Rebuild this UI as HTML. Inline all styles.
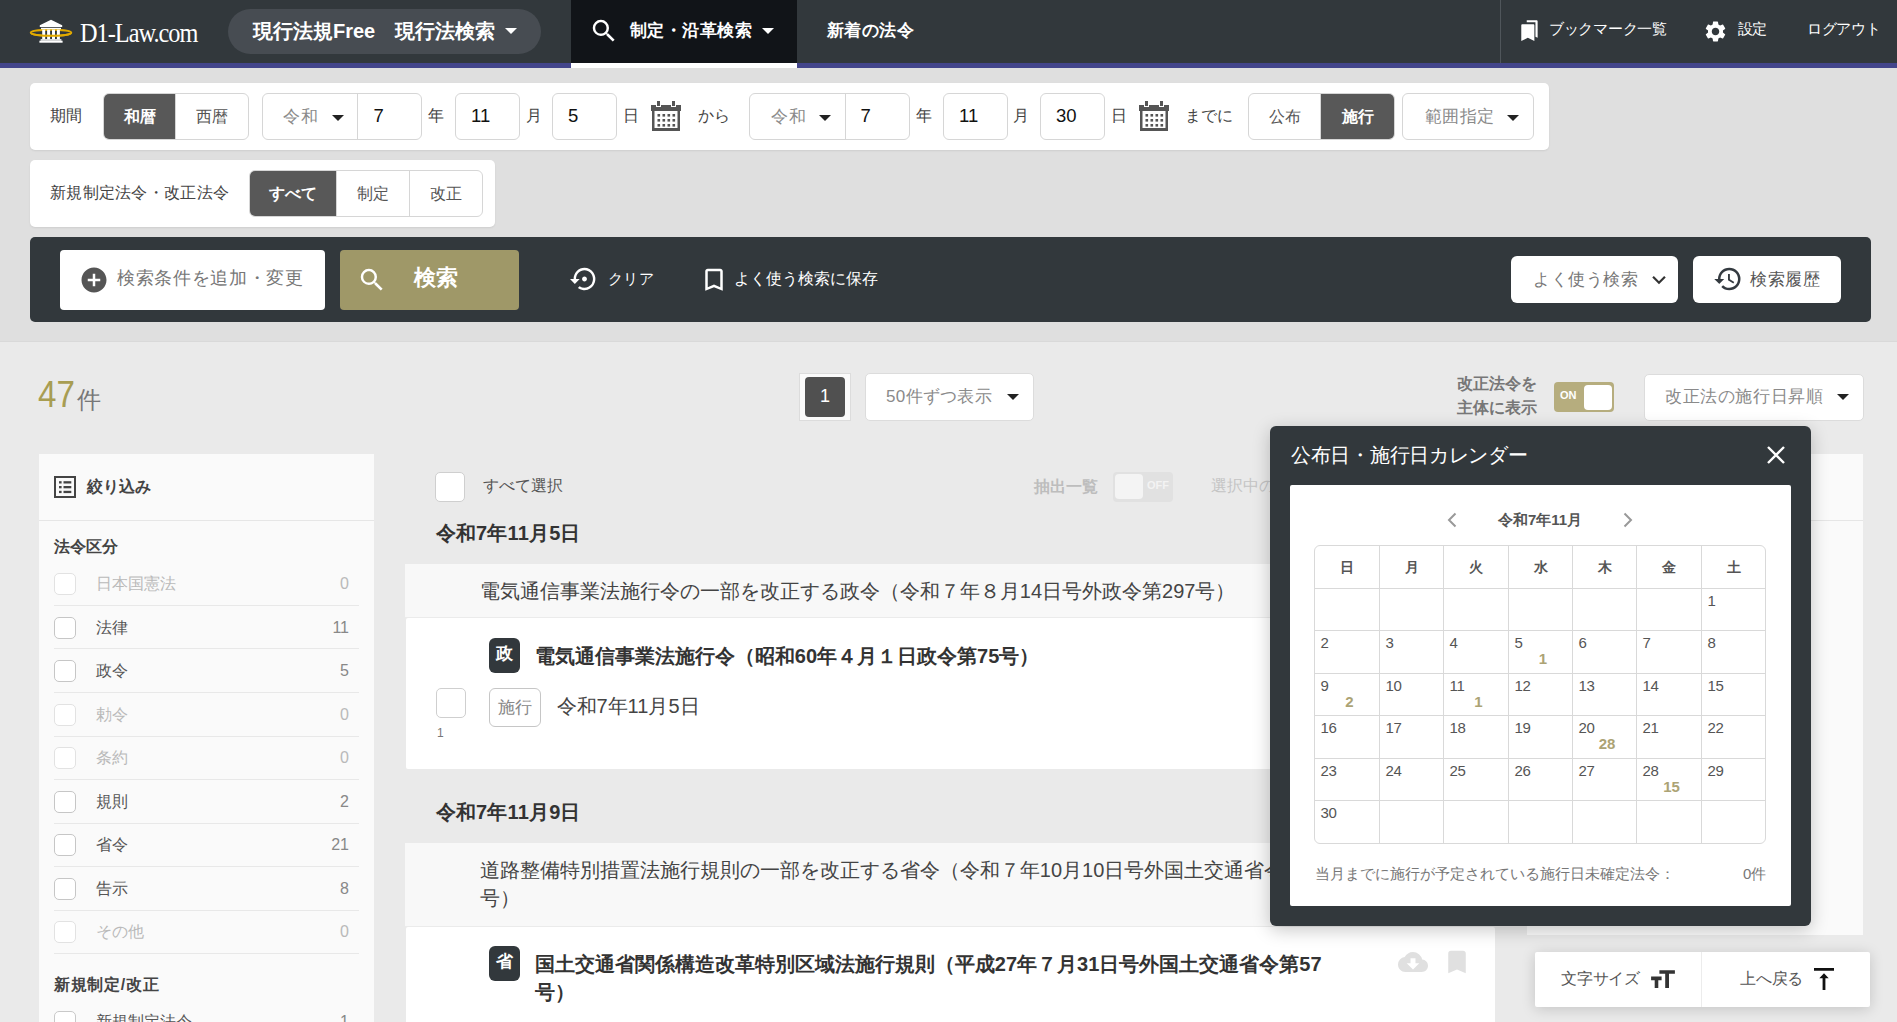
<!DOCTYPE html>
<html lang="ja">
<head>
<meta charset="utf-8">
<title>D1-Law.com</title>
<style>
*{box-sizing:border-box;margin:0;padding:0}
html,body{width:1897px;height:1022px;overflow:hidden}
body{font-family:"Liberation Sans",sans-serif;background:#dfdfdf;color:#444;position:relative;font-size:16px}
.abs{position:absolute}
.t{position:absolute;white-space:nowrap;line-height:1}
svg{display:block}
/* ---------- NAV ---------- */
#nav{position:absolute;left:0;top:0;width:1897px;height:68px;background:#32383c;border-bottom:5px solid #43458b}
#logo-text{left:80px;top:20px;font-family:"Liberation Serif",serif;font-size:27px;color:#fff;letter-spacing:-1.1px;transform:scaleX(.9);transform-origin:left center}
#pill{left:228px;top:9px;width:313px;height:45px;border-radius:22.500px;background:#474c52}
#pill .t{left:25px;top:11.500px;font-size:20px;font-weight:bold;color:#fff}
#tab{left:571px;top:0;width:226px;height:68px;background:#111418;border-bottom:5px solid #fff}
.navb{font-weight:bold;color:#fff;font-size:17px;letter-spacing:.5px}
.navr{color:#fff;font-size:15px;letter-spacing:-.3px}
.caret{position:absolute;width:0;height:0;border-left:6px solid transparent;border-right:6px solid transparent;border-top:6px solid #fff}
/* ---------- PANELS ---------- */
.panel{position:absolute;background:#fff;border-radius:5px;box-shadow:0 1px 2px rgba(0,0,0,.08)}
.lbl{font-size:16px;color:#444}
.grp{position:absolute;border:1px solid #d6d6d6;border-radius:6px;background:#fff;overflow:hidden}
.seg{position:absolute;top:0;height:100%;font-size:16px;color:#555;text-align:center}
.seg.on{background:#585858;color:#fff;font-weight:bold}
.seg + .seg{border-left:1px solid #d6d6d6}
.inp{position:absolute;border:1px solid #d6d6d6;border-radius:6px;background:#fff;height:47px;font-size:18.500px;color:#111;line-height:44px;padding-left:12px}
.sel{color:#8a8a8a;font-size:17px;letter-spacing:.6px}
.dcaret{position:absolute;width:0;height:0;border-left:6px solid transparent;border-right:6px solid transparent;border-top:6px solid #222}
/* ---------- SEARCH BAR ---------- */
#sbar{position:absolute;left:30px;top:237px;width:1841px;height:85px;background:#32383c;border-radius:5px}
.wbtn{position:absolute;background:#fff;border-radius:4px}

.cb{position:absolute;width:22px;height:22px;border:1px solid #c9c9c9;border-radius:5px;background:#fff}
.cb.big{width:30px;height:30px;border-radius:5px;border-color:#cfcfcf}
.badge{position:absolute;width:31px;height:35px;border-radius:6px;background:#32383c;color:#fff;font-weight:bold;font-size:17px;text-align:center;line-height:32px}
</style>
</head>
<body>

<!-- ================= NAV ================= -->
<div id="nav">
  <svg class="abs" style="left:29px;top:18px" width="44" height="26" viewBox="0 0 44 26">
    <ellipse cx="22" cy="14.700" rx="20.300" ry="3" fill="none" stroke="#e2aa00" stroke-width="1.900"/>
    <path d="M22 1.800 L33.200 7.200 L33.200 9 L10.800 9 L10.800 7.200 Z" fill="#fff"/>
    <rect x="12" y="9.800" width="20" height="1.400" fill="#fff"/>
    <rect x="13.200" y="11.600" width="3" height="9.600" fill="#fff"/>
    <rect x="18.100" y="11.600" width="3" height="9.600" fill="#fff"/>
    <rect x="23" y="11.600" width="3" height="9.600" fill="#fff"/>
    <rect x="27.900" y="11.600" width="3" height="9.600" fill="#fff"/>
    <rect x="11.600" y="21.200" width="20.800" height="1.500" fill="#fff"/>
    <rect x="10.400" y="22.700" width="23.200" height="2" fill="#fff"/>
    <path d="M2.500 15.600 A20.300 3 0 0 0 41.500 15.600" fill="none" stroke="#e2aa00" stroke-width="1.900"/>
  </svg>
  <div class="t" id="logo-text">D1-Law.com</div>

  <div class="abs" id="pill">
    <div class="t">現行法規Free　現行法検索</div>
    <div class="caret" style="left:277px;top:19px"></div>
  </div>

  <div class="abs" id="tab">
    <svg class="abs" style="left:18px;top:16px" width="30" height="30" viewBox="0 0 24 24"><path fill="#fff" d="M15.5 14h-.79l-.28-.27A6.47 6.47 0 0 0 16 9.5 6.5 6.5 0 1 0 9.500 16c1.610 0 3.090-.59 4.230-1.570l.27.28v.79l5 4.990L20.490 19l-4.990-5zm-6 0C7.010 14 5 11.990 5 9.500S7.010 5 9.500 5 14 7.010 14 9.500 11.990 14 9.500 14z"/></svg>
    <div class="t navb" style="left:58.500px;top:21.500px">制定・沿革検索</div>
    <div class="caret" style="left:190.500px;top:28px"></div>
  </div>
  <div class="t navb" style="left:826.500px;top:21.500px">新着の法令</div>

  <div class="abs" style="left:1500px;top:0;width:1px;height:63px;background:#50565b"></div>
  <svg class="abs" style="left:1518px;top:17.300px" width="24" height="25" viewBox="0 0 22 24" preserveAspectRatio="none"><path fill="#fff" d="M17 3H8v2h8v14l2 1V4c0-.55-.45-1-1-1z M14 7H4c-.55 0-1 .45-1 1v15l6-3 6 3V8c0-.55-.45-1-1-1z"/></svg>
  <div class="t navr" style="left:1549px;top:21.300px">ブックマーク一覧</div>
  <svg class="abs" style="left:1703.300px;top:18.500px" width="25" height="25" viewBox="0 0 24 24"><path fill="#fff" d="M19.140 12.940c.040-.3.060-.610.060-.940 0-.320-.020-.640-.070-.940l2.030-1.580a.49.49 0 0 0 .120-.610l-1.920-3.320a.488.488 0 0 0-.590-.220l-2.390.960c-.5-.380-1.030-.700-1.620-.940l-.360-2.540a.484.484 0 0 0-.480-.410h-3.840c-.240 0-.430.170-.470.410l-.360 2.540c-.590.240-1.130.570-1.620.940l-2.390-.960c-.220-.080-.470 0-.590.220L2.740 8.870c-.120.210-.080.470.120.610l2.030 1.580c-.050.300-.090.630-.090.940s.020.640.070.940l-2.030 1.580a.49.49 0 0 0-.120.610l1.920 3.320c.120.220.370.290.590.220l2.390-.960c.5.380 1.030.7 1.620.94l.36 2.540c.050.240.240.410.480.410h3.840c.240 0 .440-.170.470-.410l.36-2.540c.590-.240 1.130-.560 1.620-.940l2.390.960c.220.080.470 0 .590-.220l1.920-3.320c.120-.220.070-.470-.120-.610l-2.010-1.580zM12 15.600c-1.980 0-3.600-1.620-3.600-3.600s1.620-3.600 3.600-3.600 3.600 1.620 3.600 3.600-1.620 3.600-3.600 3.600z"/></svg>
  <div class="t navr" style="left:1737.500px;top:21.300px">設定</div>
  <div class="t navr" style="left:1807px;top:21.300px">ログアウト</div>
</div>

<!-- ================= PERIOD PANEL ================= -->
<div class="panel" style="left:30px;top:83px;width:1519px;height:67px"></div>
<div class="t lbl" style="left:50px;top:108px">期間</div>
<div class="grp" style="left:103px;top:93px;width:146px;height:47px">
  <div class="seg on" style="left:0;width:71px;line-height:45px">和暦</div>
  <div class="seg" style="left:71px;width:73px;line-height:45px">西暦</div>
</div>

<!-- from -->
<div class="grp" style="left:262px;top:93px;width:160px;height:47px">
  <div class="t sel" style="left:20px;top:14px">令和</div>
  <div class="dcaret" style="left:69px;top:21px"></div>
  <div class="abs" style="left:94px;top:0;width:1px;height:47px;background:#d6d6d6"></div>
  <div class="t" style="left:110.500px;top:12.500px;font-size:18.500px;color:#111">7</div>
</div>
<div class="t lbl" style="left:428px;top:108px">年</div>
<div class="inp" style="left:455px;top:93px;width:65px;padding-left:15px">11</div>
<div class="t lbl" style="left:526px;top:108px">月</div>
<div class="inp" style="left:552px;top:93px;width:65px;padding-left:15px">5</div>
<div class="t lbl" style="left:623px;top:108px">日</div>
<svg class="abs calico" style="left:651px;top:101px" width="30" height="30" viewBox="0 0 30 30">
  <rect x="6" y="0" width="3" height="5" fill="#555"/><rect x="21" y="0" width="3" height="5" fill="#555"/>
  <path fill="#555" d="M0 4h5v2h5v-2h10v2h5v-2h5v6h-1v20H1V10H0z M3.500 10v17h23V10z"/>
  <g fill="#555"><rect x="6.500" y="13" width="2.600" height="2.600"/><rect x="11.500" y="13" width="2.600" height="2.600"/><rect x="16.500" y="13" width="2.600" height="2.600"/><rect x="21.500" y="13" width="2.600" height="2.600"/>
  <rect x="6.500" y="18" width="2.600" height="2.600"/><rect x="11.500" y="18" width="2.600" height="2.600"/><rect x="16.500" y="18" width="2.600" height="2.600"/><rect x="21.500" y="18" width="2.600" height="2.600"/>
  <rect x="6.500" y="23" width="2.600" height="2.600"/><rect x="11.500" y="23" width="2.600" height="2.600"/><rect x="16.500" y="23" width="2.600" height="2.600"/><rect x="21.500" y="23" width="2.600" height="2.600"/></g>
</svg>
<div class="t lbl" style="left:698px;top:108px">から</div>

<!-- to -->
<div class="grp" style="left:749px;top:93px;width:161px;height:47px">
  <div class="t sel" style="left:21px;top:14px">令和</div>
  <div class="dcaret" style="left:69px;top:21px"></div>
  <div class="abs" style="left:95px;top:0;width:1px;height:47px;background:#d6d6d6"></div>
  <div class="t" style="left:110.500px;top:12.500px;font-size:18.500px;color:#111">7</div>
</div>
<div class="t lbl" style="left:916px;top:108px">年</div>
<div class="inp" style="left:943px;top:93px;width:65px;padding-left:15px">11</div>
<div class="t lbl" style="left:1013px;top:108px">月</div>
<div class="inp" style="left:1040px;top:93px;width:65px;padding-left:15px">30</div>
<div class="t lbl" style="left:1111px;top:108px">日</div>
<svg class="abs calico" style="left:1139px;top:101px" width="30" height="30" viewBox="0 0 30 30">
  <rect x="6" y="0" width="3" height="5" fill="#555"/><rect x="21" y="0" width="3" height="5" fill="#555"/>
  <path fill="#555" d="M0 4h5v2h5v-2h10v2h5v-2h5v6h-1v20H1V10H0z M3.500 10v17h23V10z"/>
  <g fill="#555"><rect x="6.500" y="13" width="2.600" height="2.600"/><rect x="11.500" y="13" width="2.600" height="2.600"/><rect x="16.500" y="13" width="2.600" height="2.600"/><rect x="21.500" y="13" width="2.600" height="2.600"/>
  <rect x="6.500" y="18" width="2.600" height="2.600"/><rect x="11.500" y="18" width="2.600" height="2.600"/><rect x="16.500" y="18" width="2.600" height="2.600"/><rect x="21.500" y="18" width="2.600" height="2.600"/>
  <rect x="6.500" y="23" width="2.600" height="2.600"/><rect x="11.500" y="23" width="2.600" height="2.600"/><rect x="16.500" y="23" width="2.600" height="2.600"/><rect x="21.500" y="23" width="2.600" height="2.600"/></g>
</svg>
<div class="t lbl" style="left:1185px;top:108px">までに</div>
<div class="grp" style="left:1248px;top:93px;width:147px;height:47px">
  <div class="seg" style="left:0;width:71px;line-height:45px">公布</div>
  <div class="seg on" style="left:71px;width:74px;line-height:45px">施行</div>
</div>
<div class="grp" style="left:1402px;top:93px;width:132px;height:47px">
  <div class="t sel" style="left:21.500px;top:14px">範囲指定</div>
  <div class="dcaret" style="left:104px;top:21px"></div>
</div>

<!-- ================= SECOND PANEL ================= -->
<div class="panel" style="left:30px;top:160px;width:465px;height:67px"></div>
<div class="t lbl" style="left:50px;top:185px;letter-spacing:.3px">新規制定法令・改正法令</div>
<div class="grp" style="left:249px;top:170px;width:234px;height:47px">
  <div class="seg on" style="left:0;width:86px;line-height:45px">すべて</div>
  <div class="seg" style="left:86px;width:72.500px;line-height:45px">制定</div>
  <div class="seg" style="left:158.500px;width:73.500px;line-height:45px">改正</div>
</div>

<!-- ================= SEARCH BAR ================= -->
<div id="sbar"></div>
<div class="wbtn" style="left:60px;top:250px;width:265px;height:60px"></div>
<svg class="abs" style="left:78.800px;top:264.500px" width="30" height="30" viewBox="0 0 24 24"><path fill="#555" d="M12 2C6.480 2 2 6.480 2 12s4.480 10 10 10 10-4.480 10-10S17.520 2 12 2zm5 11h-4v4h-2v-4H7v-2h4V7h2v4h4v2z"/></svg>
<div class="t" style="left:117px;top:269px;font-size:18px;letter-spacing:.65px;color:#777">検索条件を追加・変更</div>
<div class="abs" style="left:340px;top:250px;width:179px;height:60px;background:#9f9868;border-radius:4px"></div>
<svg class="abs" style="left:357px;top:265px" width="30" height="30" viewBox="0 0 24 24"><path fill="#fff" d="M15.5 14h-.79l-.28-.27A6.47 6.47 0 0 0 16 9.500 6.500 6.500 0 1 0 9.500 16c1.610 0 3.090-.59 4.230-1.570l.27.28v.79l5 4.990L20.490 19l-4.990-5zm-6 0C7.010 14 5 11.990 5 9.500S7.010 5 9.500 5 14 7.010 14 9.500 11.990 14 9.500 14z"/></svg>
<div class="t" style="left:414px;top:267px;font-size:22px;font-weight:bold;color:#fff">検索</div>
<svg class="abs" style="left:570px;top:264px" width="29" height="30" preserveAspectRatio="none" viewBox="0 0 24 24"><path fill="#fff" d="M14 12c0-1.100-.9-2-2-2s-2 .9-2 2 .9 2 2 2 2-.9 2-2zm-2-9a9 9 0 0 0-9 9H0l4 4 4-4H5c0-3.870 3.130-7 7-7s7 3.130 7 7a6.995 6.995 0 0 1-11.060 5.700l-1.420 1.440A9 9 0 1 0 12 3z"/></svg>
<div class="t" style="left:608px;top:271px;font-size:15px;letter-spacing:.3px;color:#fff">クリア</div>
<svg class="abs" style="left:698.500px;top:265px" width="30" height="29.500" preserveAspectRatio="none" viewBox="0 0 24 24"><path fill="#fff" d="M17 3H7c-1.100 0-2 .9-2 2v16l7-3 7 3V5c0-1.100-.9-2-2-2zm0 15-5-2.180L7 18V5h10v13z"/></svg>
<div class="t" style="left:734px;top:271px;font-size:16px;color:#fff">よく使う検索に保存</div>
<div class="wbtn" style="left:1511px;top:256px;width:167px;height:47px;border-radius:6px"></div>
<div class="t" style="left:1533px;top:270.500px;font-size:17px;letter-spacing:.5px;color:#777">よく使う検索</div>
<svg class="abs" style="left:1648px;top:269px" width="22" height="22" viewBox="0 0 24 24"><path fill="none" stroke="#333" stroke-width="2.400" d="M5.500 8.500 12 15l6.500-6.500"/></svg>
<div class="wbtn" style="left:1693px;top:256px;width:148px;height:47px;border-radius:6px"></div>
<svg class="abs" style="left:1713px;top:264px" width="30" height="30" viewBox="0 0 24 24"><path fill="#343a40" d="M13 3a9 9 0 0 0-9 9H1l3.890 3.890.07.14L9 12H6c0-3.870 3.130-7 7-7s7 3.130 7 7-3.130 7-7 7c-1.930 0-3.680-.79-4.940-2.060l-1.420 1.420A8.954 8.954 0 0 0 13 21a9 9 0 0 0 0-18zm-1 5v5l4.280 2.540.72-1.210-3.500-2.080V8H12z"/></svg>
<div class="t" style="left:1750px;top:270.500px;font-size:17px;letter-spacing:.6px;color:#555">検索履歴</div>

<!-- ================= LOWER AREA ================= -->
<div class="abs" style="left:0;top:341px;width:1897px;height:681px;background:#eaeaea;border-top:1px solid #d9d9d9"></div>
<div class="t" style="left:38px;top:377.400px;font-size:36px;color:#a89d52;transform:scaleX(.92);transform-origin:left center">47</div>
<div class="t" style="left:77.300px;top:387.500px;font-size:24px;color:#777">件</div>

<div class="abs" style="left:799px;top:373px;width:52px;height:48px;background:#fafafa;border:1px solid #dcdcdc"></div>
<div class="abs" style="left:805px;top:377px;width:40px;height:40px;background:#505050;border-radius:4px;color:#fff;font-size:18px;text-align:center;line-height:39px">1</div>
<div class="abs" style="left:865px;top:373px;width:169px;height:48px;background:#fff;border:1px solid #dcdcdc;border-radius:5px"></div>
<div class="t sel" style="left:886px;top:388px;letter-spacing:.3px">50件ずつ表示</div>
<div class="dcaret" style="left:1007px;top:394px"></div>

<div class="t" style="left:1457px;top:376px;font-size:16px;font-weight:bold;color:#777">改正法令を</div>
<div class="t" style="left:1457px;top:399.500px;font-size:16px;font-weight:bold;color:#777">主体に表示</div>
<div class="abs" style="left:1554px;top:382px;width:60px;height:30px;background:#b6ad7e;border-radius:4px"></div>
<div class="t" style="left:1560px;top:390px;font-size:11px;font-weight:bold;color:#fff">ON</div>
<div class="abs" style="left:1584px;top:384.500px;width:28px;height:25px;background:#fff;border-radius:4px"></div>
<div class="abs" style="left:1643.500px;top:374px;width:220.500px;height:47px;background:#fff;border:1px solid #dcdcdc;border-radius:5px"></div>
<div class="t sel" style="left:1665px;top:388px">改正法の施行日昇順</div>
<div class="dcaret" style="left:1837px;top:394px"></div>

<div class="abs" style="left:39px;top:454px;width:335px;height:568px;background:#fafafa"></div>
<div class="abs" style="left:39px;top:520px;width:335px;height:1px;background:#e6e6e6"></div>
<svg class="abs" style="left:54px;top:476px" width="22" height="22" viewBox="0 0 22 22"><rect x="1" y="1" width="20" height="20" fill="none" stroke="#444" stroke-width="2"/><g fill="#444"><rect x="5" y="5.200" width="2.600" height="2.300"/><rect x="9.500" y="5.200" width="7.800" height="2.300"/><rect x="5" y="10" width="2.600" height="2.300"/><rect x="9.500" y="10" width="7.800" height="2.300"/><rect x="5" y="14.800" width="2.600" height="2.300"/><rect x="9.500" y="14.800" width="7.800" height="2.300"/></g></svg>
<div class="t" style="left:86.500px;top:478.500px;font-size:16px;font-weight:bold;color:#444">絞り込み</div>
<div class="t" style="left:54px;top:539px;font-size:16px;font-weight:bold;color:#444">法令区分</div>
<div class="cb" style="left:54px;top:573px;border-color:#e2e2e2"></div><div class="t" style="left:96px;top:576px;font-size:16px;color:#b9b9b9">日本国憲法</div><div class="t" style="right:1548px;top:576px;font-size:16px;color:#b9b9b9">0</div><div class="abs" style="left:54px;top:605px;width:305px;height:1px;background:#e8e8e8"></div>
<div class="cb" style="left:54px;top:617px;border-color:#c6c6c6"></div><div class="t" style="left:96px;top:620px;font-size:16px;color:#555">法律</div><div class="t" style="right:1548px;top:620px;font-size:16px;color:#888">11</div><div class="abs" style="left:54px;top:648px;width:305px;height:1px;background:#e8e8e8"></div>
<div class="cb" style="left:54px;top:660px;border-color:#c6c6c6"></div><div class="t" style="left:96px;top:663px;font-size:16px;color:#555">政令</div><div class="t" style="right:1548px;top:663px;font-size:16px;color:#888">5</div><div class="abs" style="left:54px;top:692px;width:305px;height:1px;background:#e8e8e8"></div>
<div class="cb" style="left:54px;top:704px;border-color:#e2e2e2"></div><div class="t" style="left:96px;top:707px;font-size:16px;color:#b9b9b9">勅令</div><div class="t" style="right:1548px;top:707px;font-size:16px;color:#b9b9b9">0</div><div class="abs" style="left:54px;top:736px;width:305px;height:1px;background:#e8e8e8"></div>
<div class="cb" style="left:54px;top:747px;border-color:#e2e2e2"></div><div class="t" style="left:96px;top:750px;font-size:16px;color:#b9b9b9">条約</div><div class="t" style="right:1548px;top:750px;font-size:16px;color:#b9b9b9">0</div><div class="abs" style="left:54px;top:779px;width:305px;height:1px;background:#e8e8e8"></div>
<div class="cb" style="left:54px;top:791px;border-color:#c6c6c6"></div><div class="t" style="left:96px;top:794px;font-size:16px;color:#555">規則</div><div class="t" style="right:1548px;top:794px;font-size:16px;color:#888">2</div><div class="abs" style="left:54px;top:823px;width:305px;height:1px;background:#e8e8e8"></div>
<div class="cb" style="left:54px;top:834px;border-color:#c6c6c6"></div><div class="t" style="left:96px;top:837px;font-size:16px;color:#555">省令</div><div class="t" style="right:1548px;top:837px;font-size:16px;color:#888">21</div><div class="abs" style="left:54px;top:866px;width:305px;height:1px;background:#e8e8e8"></div>
<div class="cb" style="left:54px;top:878px;border-color:#c6c6c6"></div><div class="t" style="left:96px;top:881px;font-size:16px;color:#555">告示</div><div class="t" style="right:1548px;top:881px;font-size:16px;color:#888">8</div><div class="abs" style="left:54px;top:910px;width:305px;height:1px;background:#e8e8e8"></div>
<div class="cb" style="left:54px;top:921px;border-color:#e2e2e2"></div><div class="t" style="left:96px;top:924px;font-size:16px;color:#b9b9b9">その他</div><div class="t" style="right:1548px;top:924px;font-size:16px;color:#b9b9b9">0</div><div class="abs" style="left:54px;top:953px;width:305px;height:1px;background:#e8e8e8"></div>
<div class="t" style="left:54px;top:977px;font-size:16px;letter-spacing:.7px;font-weight:bold;color:#444">新規制定/改正</div>
<div class="cb" style="left:54px;top:1011px"></div>
<div class="t" style="left:96px;top:1014px;font-size:16px;color:#555">新規制定法令</div>
<div class="t" style="right:1548px;top:1014px;font-size:16px;color:#888">1</div>

<div class="cb big" style="left:435px;top:472px"></div>
<div class="t" style="left:483px;top:478px;font-size:16px;color:#555">すべて選択</div>
<div class="t" style="left:1034px;top:478.500px;font-size:16px;font-weight:bold;color:#bdbdbd">抽出一覧</div>
<div class="abs" style="left:1113px;top:472px;width:60px;height:30px;background:#e1e1e1;border-radius:4px"></div>
<div class="abs" style="left:1115px;top:474px;width:28px;height:25px;background:#f4f4f4;border-radius:4px"></div>
<div class="t" style="left:1147px;top:480px;font-size:11px;font-weight:bold;color:#f3f3f3">OFF</div>
<div class="t" style="left:1211px;top:478px;font-size:16px;color:#c4c4c4">選択中の</div>

<div class="t" style="left:435.500px;top:523.400px;font-size:20px;letter-spacing:.2px;font-weight:bold;color:#333">令和7年11月5日</div>
<div class="abs" style="left:405px;top:564px;width:1090px;height:54px;background:#f8f8f8;border-bottom:1px solid #ebebeb"></div>
<div class="t" style="left:479.800px;top:581px;font-size:20px;color:#444">電気通信事業法施行令の一部を改正する政令（令和７年８月14日号外政令第297号）</div>
<div class="abs" style="left:406px;top:618px;width:1089px;height:151px;background:#fff;border-radius:2px"></div>
<div class="badge" style="left:489px;top:638px">政</div>
<div class="t" style="left:534.800px;top:646px;font-size:20px;font-weight:bold;color:#333">電気通信事業法施行令（昭和60年４月１日政令第75号）</div>
<div class="cb big" style="left:436px;top:688px"></div>
<div class="t" style="left:437px;top:727px;font-size:12px;color:#777">1</div>
<div class="abs" style="left:489px;top:688px;width:52px;height:39px;border:1px solid #c6c6c6;border-radius:6px;background:#fff"></div>
<div class="t" style="left:498px;top:699px;font-size:17px;color:#888">施行</div>
<div class="t" style="left:556.500px;top:696px;font-size:20px;color:#444">令和7年11月5日</div>

<div class="t" style="left:435.500px;top:802.400px;font-size:20px;letter-spacing:.2px;font-weight:bold;color:#333">令和7年11月9日</div>
<div class="abs" style="left:405px;top:843px;width:1090px;height:84px;background:#f8f8f8;border-bottom:1px solid #ebebeb"></div>
<div class="t" style="left:479.800px;top:860px;font-size:20px;color:#444">道路整備特別措置法施行規則の一部を改正する省令（令和７年10月10日号外国土交通省令第115</div>
<div class="t" style="left:479.800px;top:888px;font-size:20px;color:#444">号）</div>
<div class="abs" style="left:406px;top:927px;width:1089px;height:95px;background:#fff;border-radius:2px 2px 0 0"></div>
<div class="badge" style="left:489px;top:946px">省</div>
<div class="t" style="left:534.800px;top:954px;font-size:20px;font-weight:bold;color:#333">国土交通省関係構造改革特別区域法施行規則（平成27年７月31日号外国土交通省令第57</div>
<div class="t" style="left:534.800px;top:982px;font-size:20px;font-weight:bold;color:#333">号）</div>
<svg class="abs" style="left:1397.700px;top:947px" width="30" height="30" viewBox="0 0 24 24"><path fill="#e0e0e0" d="M19.350 10.040A7.490 7.490 0 0 0 12 4C9.110 4 6.600 5.640 5.350 8.040A5.994 5.994 0 0 0 0 14c0 3.310 2.690 6 6 6h13c2.760 0 5-2.240 5-5 0-2.640-2.050-4.780-4.650-4.960zM17 13l-5 5-5-5h3V9h4v4h3z"/></svg>
<svg class="abs" style="left:1441.700px;top:946.500px" width="30" height="30" viewBox="0 0 24 24"><path fill="#e0e0e0" d="M17 3H7c-1.100 0-2 .9-2 2v16l7-3 7 3V5c0-1.100-.9-2-2-2z"/></svg>

<div class="abs" style="left:1527px;top:454px;width:336px;height:481px;background:#fafafa"></div>
<div class="abs" style="left:1527px;top:520px;width:336px;height:1px;background:#e6e6e6"></div>

<div class="abs" style="left:1270px;top:426px;width:541px;height:500px;background:#32383c;border-radius:6px;box-shadow:0 4px 18px rgba(0,0,0,.22)"></div>
<div class="t" style="left:1291px;top:445px;font-size:20px;letter-spacing:-.3px;color:#fff">公布日・施行日カレンダー</div>
<svg class="abs" style="left:1766px;top:445px" width="20" height="20" viewBox="0 0 20 20"><path d="M2 2 18 18 M18 2 2 18" stroke="#fff" stroke-width="2.400" fill="none"/></svg>
<div class="abs" style="left:1290px;top:485px;width:501px;height:421px;background:#fff;border-radius:2px"></div>
<svg class="abs" style="left:1445px;top:511px" width="14" height="18" viewBox="0 0 14 18"><path d="M10.500 2.500 4 9l6.500 6.500" stroke="#999" stroke-width="2" fill="none"/></svg>
<div class="t" style="left:1440px;width:200px;text-align:center;top:512px;font-size:15px;font-weight:bold;color:#555">令和7年11月</div>
<svg class="abs" style="left:1621px;top:511px" width="14" height="18" viewBox="0 0 14 18"><path d="M3.500 2.500 10 9l-6.500 6.500" stroke="#999" stroke-width="2" fill="none"/></svg>
<div class="abs" style="left:1314px;top:545px;width:452px;height:299px;border:1px solid #d9d9d9;border-radius:6px"></div>
<div class="abs" style="left:1379px;top:545px;width:1px;height:299px;background:#d9d9d9"></div><div class="abs" style="left:1443px;top:545px;width:1px;height:299px;background:#d9d9d9"></div><div class="abs" style="left:1508px;top:545px;width:1px;height:299px;background:#d9d9d9"></div><div class="abs" style="left:1572px;top:545px;width:1px;height:299px;background:#d9d9d9"></div><div class="abs" style="left:1636px;top:545px;width:1px;height:299px;background:#d9d9d9"></div><div class="abs" style="left:1701px;top:545px;width:1px;height:299px;background:#d9d9d9"></div>
<div class="abs" style="left:1314px;top:588px;width:452px;height:1px;background:#d9d9d9"></div><div class="abs" style="left:1314px;top:630px;width:452px;height:1px;background:#d9d9d9"></div><div class="abs" style="left:1314px;top:673px;width:452px;height:1px;background:#d9d9d9"></div><div class="abs" style="left:1314px;top:715px;width:452px;height:1px;background:#d9d9d9"></div><div class="abs" style="left:1314px;top:758px;width:452px;height:1px;background:#d9d9d9"></div><div class="abs" style="left:1314px;top:800px;width:452px;height:1px;background:#d9d9d9"></div>
<div class="t" style="left:1327.0px;width:40px;text-align:center;top:560px;font-size:14px;font-weight:bold;color:#555">日</div><div class="t" style="left:1391.5px;width:40px;text-align:center;top:560px;font-size:14px;font-weight:bold;color:#555">月</div><div class="t" style="left:1456.0px;width:40px;text-align:center;top:560px;font-size:14px;font-weight:bold;color:#555">火</div><div class="t" style="left:1520.5px;width:40px;text-align:center;top:560px;font-size:14px;font-weight:bold;color:#555">水</div><div class="t" style="left:1584.5px;width:40px;text-align:center;top:560px;font-size:14px;font-weight:bold;color:#555">木</div><div class="t" style="left:1649.0px;width:40px;text-align:center;top:560px;font-size:14px;font-weight:bold;color:#555">金</div><div class="t" style="left:1713.5px;width:40px;text-align:center;top:560px;font-size:14px;font-weight:bold;color:#555">土</div>
<div class="t" style="left:1707.5px;top:593px;font-size:15px;letter-spacing:-.3px;color:#555">1</div><div class="t" style="left:1320.5px;top:635px;font-size:15px;letter-spacing:-.3px;color:#555">2</div><div class="t" style="left:1385.5px;top:635px;font-size:15px;letter-spacing:-.3px;color:#555">3</div><div class="t" style="left:1449.5px;top:635px;font-size:15px;letter-spacing:-.3px;color:#555">4</div><div class="t" style="left:1514.5px;top:635px;font-size:15px;letter-spacing:-.3px;color:#555">5</div><div class="t" style="left:1523.0px;width:40px;text-align:center;top:650.5px;font-size:15px;font-weight:bold;color:#aca375">1</div><div class="t" style="left:1578.5px;top:635px;font-size:15px;letter-spacing:-.3px;color:#555">6</div><div class="t" style="left:1642.5px;top:635px;font-size:15px;letter-spacing:-.3px;color:#555">7</div><div class="t" style="left:1707.5px;top:635px;font-size:15px;letter-spacing:-.3px;color:#555">8</div><div class="t" style="left:1320.5px;top:678px;font-size:15px;letter-spacing:-.3px;color:#555">9</div><div class="t" style="left:1329.5px;width:40px;text-align:center;top:693.5px;font-size:15px;font-weight:bold;color:#aca375">2</div><div class="t" style="left:1385.5px;top:678px;font-size:15px;letter-spacing:-.3px;color:#555">10</div><div class="t" style="left:1449.5px;top:678px;font-size:15px;letter-spacing:-.3px;color:#555">11</div><div class="t" style="left:1458.5px;width:40px;text-align:center;top:693.5px;font-size:15px;font-weight:bold;color:#aca375">1</div><div class="t" style="left:1514.5px;top:678px;font-size:15px;letter-spacing:-.3px;color:#555">12</div><div class="t" style="left:1578.5px;top:678px;font-size:15px;letter-spacing:-.3px;color:#555">13</div><div class="t" style="left:1642.5px;top:678px;font-size:15px;letter-spacing:-.3px;color:#555">14</div><div class="t" style="left:1707.5px;top:678px;font-size:15px;letter-spacing:-.3px;color:#555">15</div><div class="t" style="left:1320.5px;top:720px;font-size:15px;letter-spacing:-.3px;color:#555">16</div><div class="t" style="left:1385.5px;top:720px;font-size:15px;letter-spacing:-.3px;color:#555">17</div><div class="t" style="left:1449.5px;top:720px;font-size:15px;letter-spacing:-.3px;color:#555">18</div><div class="t" style="left:1514.5px;top:720px;font-size:15px;letter-spacing:-.3px;color:#555">19</div><div class="t" style="left:1578.5px;top:720px;font-size:15px;letter-spacing:-.3px;color:#555">20</div><div class="t" style="left:1587.0px;width:40px;text-align:center;top:735.5px;font-size:15px;font-weight:bold;color:#aca375">28</div><div class="t" style="left:1642.5px;top:720px;font-size:15px;letter-spacing:-.3px;color:#555">21</div><div class="t" style="left:1707.5px;top:720px;font-size:15px;letter-spacing:-.3px;color:#555">22</div><div class="t" style="left:1320.5px;top:763px;font-size:15px;letter-spacing:-.3px;color:#555">23</div><div class="t" style="left:1385.5px;top:763px;font-size:15px;letter-spacing:-.3px;color:#555">24</div><div class="t" style="left:1449.5px;top:763px;font-size:15px;letter-spacing:-.3px;color:#555">25</div><div class="t" style="left:1514.5px;top:763px;font-size:15px;letter-spacing:-.3px;color:#555">26</div><div class="t" style="left:1578.5px;top:763px;font-size:15px;letter-spacing:-.3px;color:#555">27</div><div class="t" style="left:1642.5px;top:763px;font-size:15px;letter-spacing:-.3px;color:#555">28</div><div class="t" style="left:1651.5px;width:40px;text-align:center;top:778.5px;font-size:15px;font-weight:bold;color:#aca375">15</div><div class="t" style="left:1707.5px;top:763px;font-size:15px;letter-spacing:-.3px;color:#555">29</div><div class="t" style="left:1320.5px;top:805px;font-size:15px;letter-spacing:-.3px;color:#555">30</div>
<div class="t" style="left:1315px;top:865.800px;font-size:15px;color:#777">当月までに施行が予定されている施行日未確定法令：</div>
<div class="t" style="right:131px;top:865.800px;font-size:15px;letter-spacing:-.2px;color:#777">0件</div>
<div class="abs" style="left:1535px;top:952px;width:335px;height:55px;background:#fff;border-radius:2px;box-shadow:0 2px 14px rgba(0,0,0,.17)"></div>
<div class="abs" style="left:1701px;top:952px;width:1px;height:55px;background:#ececec"></div>
<div class="t" style="left:1561px;top:971px;font-size:16px;letter-spacing:-.2px;color:#555">文字サイズ</div>
<svg class="abs" style="left:1650px;top:969px" width="26" height="20" viewBox="0 0 26 20"><path fill="#333" d="M9.400 1.200h15.500v3.600h-5.900V19h-3.800V4.800H9.400z M1.100 7.600h10.500v3.600H8.300V19H4.700v-7.800H1.100z"/></svg>
<div class="t" style="left:1740px;top:971px;font-size:16px;letter-spacing:-.2px;color:#555">上へ戻る</div>
<svg class="abs" style="left:1812px;top:966px" width="24" height="24" viewBox="0 0 24 24"><path fill="#111" d="M2 2h20v2.700H2z M12 7.300l4.700 5h-3.300V24h-2.800V12.300H7.300z"/></svg>


</body>
</html>
